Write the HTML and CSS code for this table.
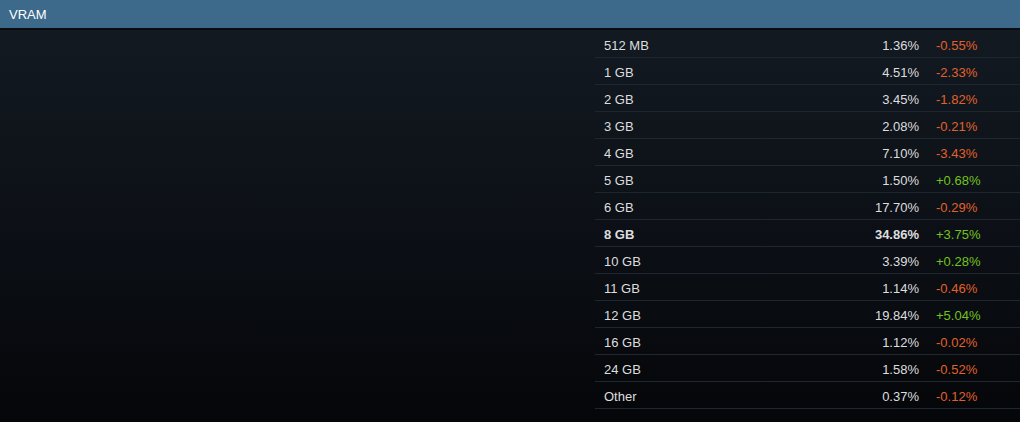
FILE: index.html
```html
<!DOCTYPE html>
<html lang="en">
<head>
    <meta charset="UTF-8">
    <title>VRAM</title>
    <link rel="stylesheet" href="styles.css">
</head>
<body>
    <div class="header">VRAM</div>

    <div class="content">
        <div class="spacer"></div>
        <div class="stats">
            <div class="row"><span class="name">512 MB</span><span class="pct">1.36%</span><span class="change neg">-0.55%</span></div>
            <div class="row"><span class="name">1 GB</span><span class="pct">4.51%</span><span class="change neg">-2.33%</span></div>
            <div class="row"><span class="name">2 GB</span><span class="pct">3.45%</span><span class="change neg">-1.82%</span></div>
            <div class="row"><span class="name">3 GB</span><span class="pct">2.08%</span><span class="change neg">-0.21%</span></div>
            <div class="row"><span class="name">4 GB</span><span class="pct">7.10%</span><span class="change neg">-3.43%</span></div>
            <div class="row"><span class="name">5 GB</span><span class="pct">1.50%</span><span class="change pos">+0.68%</span></div>
            <div class="row"><span class="name">6 GB</span><span class="pct">17.70%</span><span class="change neg">-0.29%</span></div>
            <div class="row top"><span class="name">8 GB</span><span class="pct">34.86%</span><span class="change pos">+3.75%</span></div>
            <div class="row"><span class="name">10 GB</span><span class="pct">3.39%</span><span class="change pos">+0.28%</span></div>
            <div class="row"><span class="name">11 GB</span><span class="pct">1.14%</span><span class="change neg">-0.46%</span></div>
            <div class="row"><span class="name">12 GB</span><span class="pct">19.84%</span><span class="change pos">+5.04%</span></div>
            <div class="row"><span class="name">16 GB</span><span class="pct">1.12%</span><span class="change neg">-0.02%</span></div>
            <div class="row"><span class="name">24 GB</span><span class="pct">1.58%</span><span class="change neg">-0.52%</span></div>
            <div class="row"><span class="name">Other</span><span class="pct">0.37%</span><span class="change neg">-0.12%</span></div>
        </div>
    </div>
</body>
</html>
```

FILE: styles.css
```css
html, body {
    height: 100%;
}

body {
    margin: 0;
    font-family: "Liberation Sans", Arial, sans-serif;
    font-size: 13px;
    color: #dcdedf;
    background: linear-gradient(to bottom, #141b23 0%, #0c1016 55%, #050609 100%);
}

.header {
    height: 28px;
    line-height: 30px;
    padding-left: 9px;
    background-color: #3d6a8b;
    color: #ffffff;
    font-size: 13px;
    border-bottom: 2px solid #080b0f;
}

.content {
    display: flex;
}

.spacer {
    width: 595px;
}

.stats {
    flex: 1;
    margin-top: 1px;
}

.row {
    display: flex;
    height: 26px;
    line-height: 29px;
    overflow: hidden;
    border-bottom: 1px solid #1e262e;
}

.name {
    width: 230px;
    padding-left: 9px;
}

.pct {
    width: 85px;
    text-align: right;
}

.change {
    padding-left: 17px;
}

/* cor da variação */
.neg {
    color: #e2612b;
}

.pos {
    color: #73c21e;
}

.top {
    font-weight: bold;
}

.top .change {
    font-weight: normal;
}
```
